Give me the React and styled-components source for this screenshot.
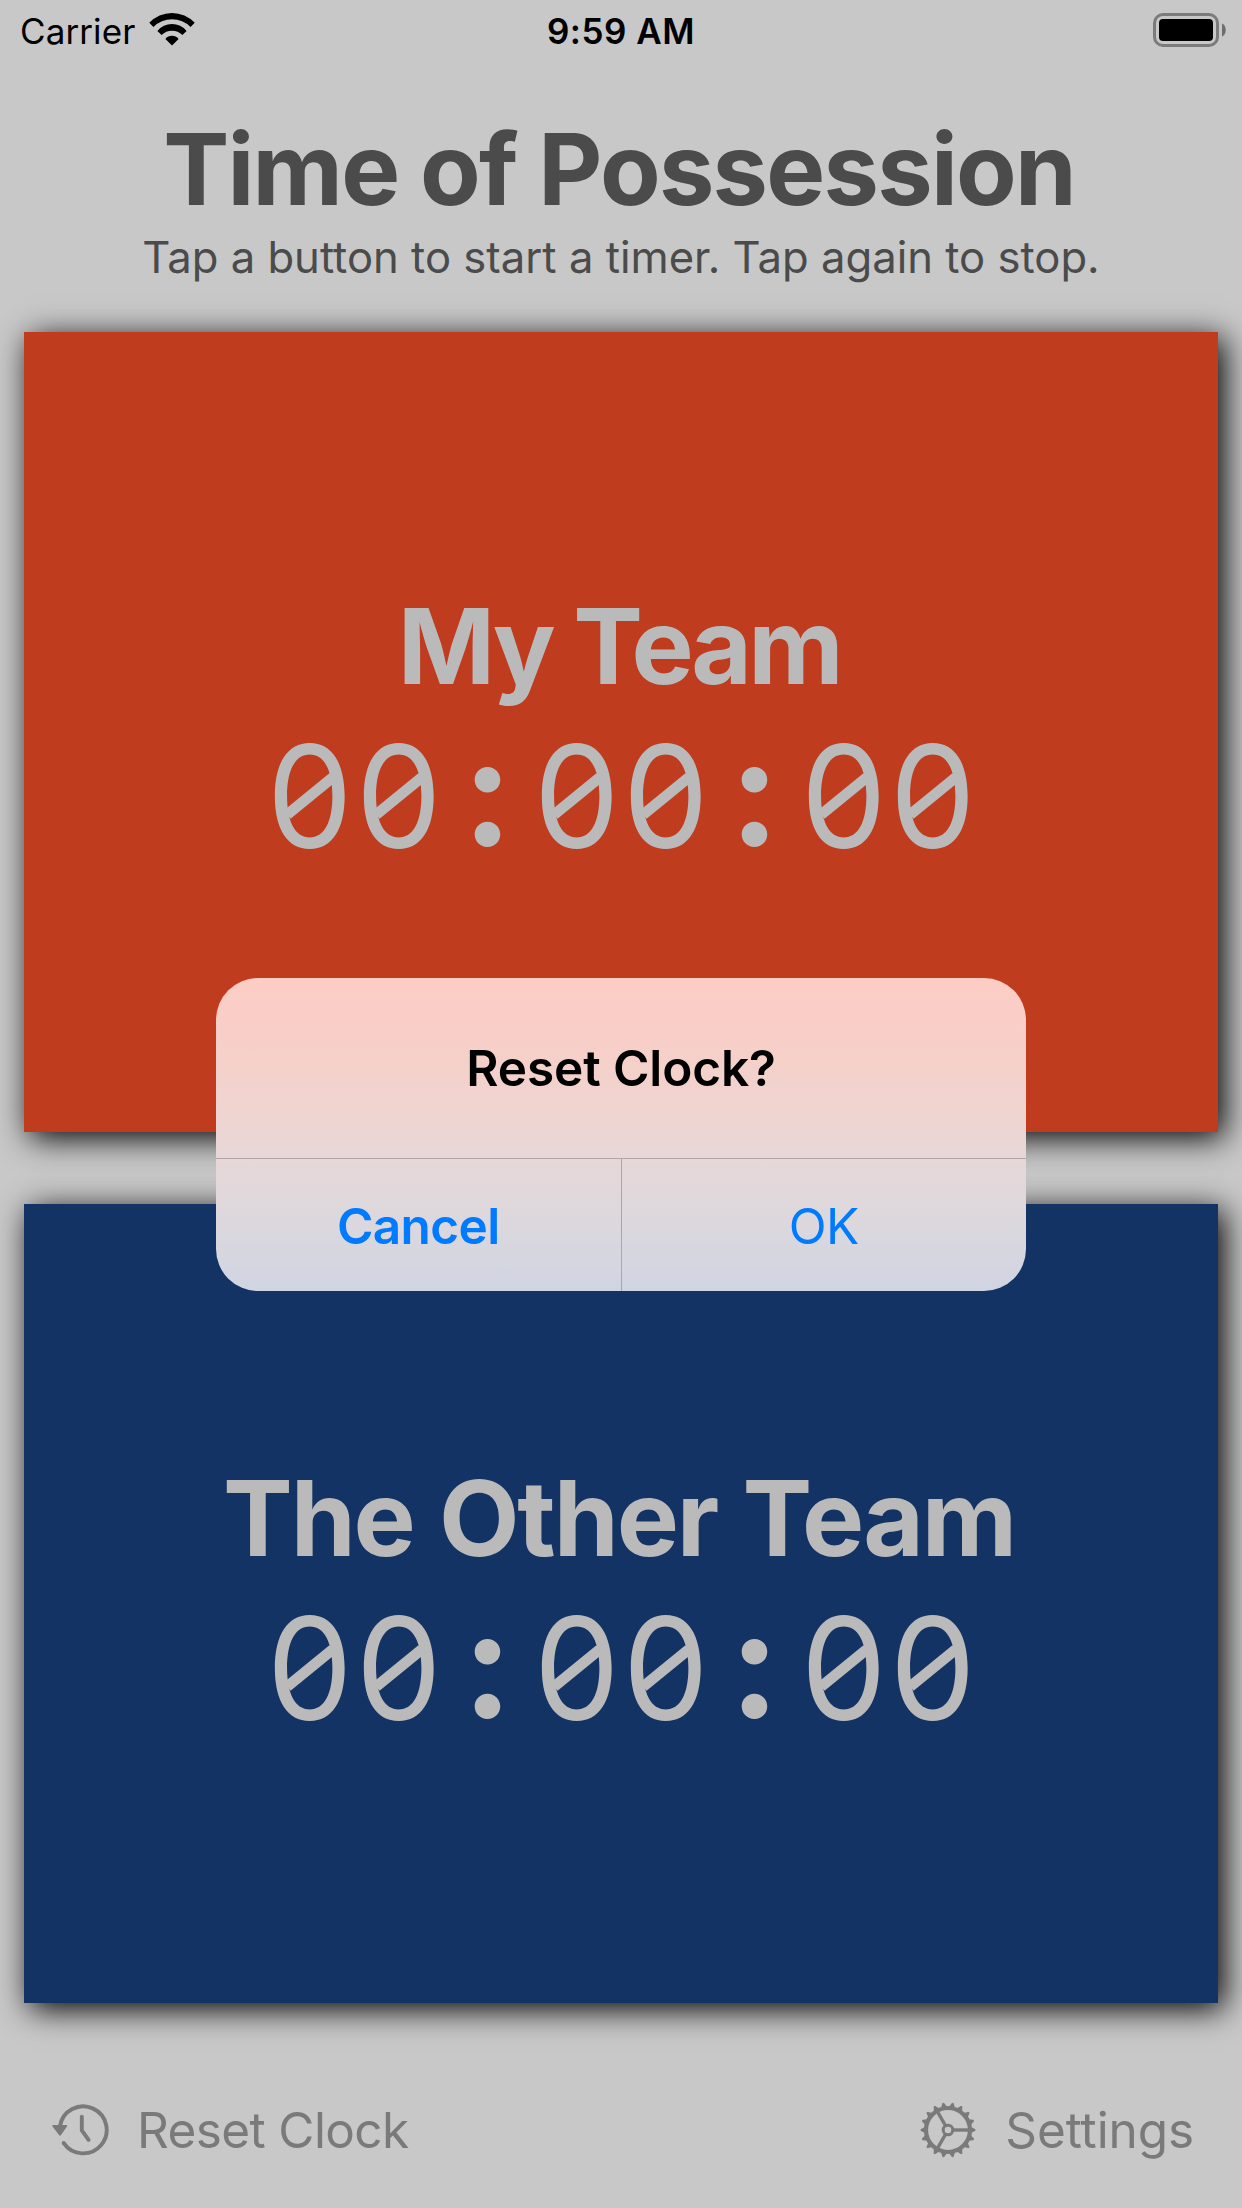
import React from "react";
import styled, { createGlobalStyle } from "styled-components";

const GlobalStyle = createGlobalStyle`
  * { box-sizing: border-box; }
  html, body { margin: 0; padding: 0; }
  body {
    background: #c8c8c8;
    font-family: Inter, "Liberation Sans", sans-serif;
  }
  button { font-family: inherit; border: 0; padding: 0; margin: 0; background: none; }
`;

const Screen = styled.div`
  position: relative;
  width: 1242px;
  height: 2208px;
  overflow: hidden;
  display: flex;
  flex-direction: column;
  background: #c8c8c8;
`;

const StatusBar = styled.div`
  display: grid;
  grid-template-columns: 1fr auto 1fr;
  align-items: center;
  height: 62px;
  padding: 0 15px;
  color: #000;
  font-size: 35px;
  line-height: 62px;
`;

const StatusLeft = styled.div`
  display: flex;
  align-items: center;
  gap: 14px;
  padding-left: 5px;

  svg { margin-bottom: 4px; }
`;

const Carrier = styled.span`
  letter-spacing: 0.1px;
`;

const Clock = styled.span`
  font-weight: 600;
  letter-spacing: 0.5px;
`;

const StatusRight = styled.div`
  display: flex;
  justify-content: flex-end;

  svg { margin-bottom: 2px; }
`;

const Header = styled.header`
  height: 270px;
  padding-top: 47px;
  text-align: center;
  color: #4b4b4b;
  white-space: nowrap;
`;

const Title = styled.h1`
  margin: 0;
  padding-right: 4px;
  font-size: 99px;
  line-height: 120px;
  font-weight: 700;
  letter-spacing: -1.75px;
`;

const Subtitle = styled.p`
  margin: 0;
  font-size: 43.6px;
  line-height: 57px;
`;

const Teams = styled.main`
  display: flex;
  flex-direction: column;
  gap: 72px;
  padding: 0 24px;
`;

const TeamCard = styled.section`
  height: 799.5px;
  padding-top: 1px;
  display: flex;
  flex-direction: column;
  align-items: center;
  justify-content: center;
  background: ${(p) => p.$color};
  color: #bababa;
  box-shadow: 6px 6px 30px #000;
  white-space: nowrap;
`;

const TeamName = styled.h2`
  margin: 0;
  padding-right: 4px;
  font-size: 104.5px;
  line-height: 128px;
  font-weight: 700;
  letter-spacing: ${(p) => p.$tracking}px;
  word-spacing: ${(p) => p.$wordGap || 0}px;
`;

const Timer = styled.div`
  display: flex;
  font-size: 142px;
  line-height: 172px;
`;

const Digit = styled.span`
  position: relative;
  width: 89px;
  text-align: center;
  transform: scaleX(0.96);

  &::after {
    content: "";
    position: absolute;
    left: 50%;
    top: 50%;
    width: 60px;
    height: 11px;
    background: currentColor;
    transform: translate(-50%, -50%) rotate(-38.1deg);
  }
`;

const Colon = styled.span`
  width: 89px;
  margin-top: -5px;
  text-align: center;
  font-size: 151px;
  font-weight: 660;
`;

const Toolbar = styled.footer`
  display: flex;
  justify-content: space-between;
  align-items: center;
  margin-top: 67px;
  height: 120px;
  padding: 0 48px 0 50px;
`;

const ToolButton = styled.button`
  display: flex;
  align-items: center;
  gap: 27px;
  color: #7a7a7a;
  font-size: 49.5px;
  line-height: 60px;
  letter-spacing: ${(p) => p.$tracking}px;
`;

const Overlay = styled.div`
  position: absolute;
  inset: 0;
  display: flex;
  justify-content: center;
  align-items: flex-start;
  padding-top: 978px;
`;

const Alert = styled.div`
  width: 810px;
  height: 313px;
  display: flex;
  flex-direction: column;
  overflow: hidden;
  border-radius: 42px;
  background: linear-gradient(180deg, #fccdc5 0%, #f7cfc8 22%, #efd4cf 42%, #e6d7d8 58%, #ded8dc 74%, #d5d6e0 90%, #d0d5e2 100%);
`;

const AlertTitle = styled.div`
  height: 181px;
  border-bottom: 1px solid #b9a2a2;
  color: #000;
  text-align: center;
  font-size: 49.5px;
  line-height: 180px;
  font-weight: 600;
  letter-spacing: -0.1px;
`;

const AlertActions = styled.div`
  flex: 1;
  display: flex;
`;

const AlertButton = styled.button`
  flex: 1;
  padding-top: 3px;
  color: #007aff;
  font-size: 49.5px;
  line-height: 129px;
  font-weight: ${(p) => (p.$bold ? 600 : 400)};
  letter-spacing: -0.6px;
  & + & { border-left: 1px solid #aba5ad; }
`;

function WifiIcon() {
  return (
    <svg width="46" height="34" viewBox="-23 -33.5 46 34" fill="#000">
      <path d="M-22.7-22.7A31 31 0 0 1 22.7-22.7L18.6-18.6A26.3 26.3 0 0 0-18.6-18.6Z" />
      <path d="M-14.6-14.6A19 19 0 0 1 14.6-14.6L10.4-10.4A14.7 14.7 0 0 0-10.4-10.4Z" />
      <path d="M-6.6-6.6A8.4 8.4 0 0 1 6.6-6.6L0 0Z" />
    </svg>
  );
}

function BatteryIcon() {
  return (
    <svg width="74" height="34" viewBox="0 0 74 34">
      <rect x="1.5" y="1.5" width="63" height="31" rx="8.5" fill="none" stroke="#7b7b7b" strokeWidth="3" />
      <rect x="6" y="6" width="54" height="22" rx="4" fill="#000" />
      <path d="M69 10.5C74 12.5 74 21.5 69 23.5Z" fill="#6e6e6e" />
    </svg>
  );
}

function ResetIcon() {
  return (
    <svg width="60" height="60" viewBox="0 0 60 60" fill="none" stroke="currentColor" strokeWidth="3.9" strokeLinecap="round" strokeLinejoin="round">
      <path d="M13.6 42.9A23.5 23.5 0 1 0 10 26" strokeLinecap="butt" />
      <circle cx="13.6" cy="42.9" r="1.95" fill="currentColor" stroke="none" />
      <path d="M3.3 25.9H16.2L10 34.6Z" fill="currentColor" strokeWidth="2" />
      <path d="M31.8 16.8V30.3L38.6 39.8" />
    </svg>
  );
}

const TEETH = Array.from({ length: 18 }, (_, i) => i * 20);

function GearIcon() {
  return (
    <svg width="60" height="60" viewBox="-30 -30 60 60" fill="none" stroke="currentColor">
      <circle r="22" strokeWidth="4.2" />
      {TEETH.map((a) => (
        <path key={a} d="M23-3L27-1Q28.4 0 27 1L23 3Z" fill="currentColor" stroke="none" transform={`rotate(${a})`} />
      ))}
      <circle r="4.8" strokeWidth="3" />
      {[0, 120, 240].map((a) => (
        <path key={a} d="M5.5 0H22" strokeWidth="3.4" transform={`rotate(${a})`} />
      ))}
    </svg>
  );
}

function Time({ value }) {
  return (
    <Timer>
      {value.split("").map((c, i) => (c === ":" ? <Colon key={i}>{c}</Colon> : <Digit key={i}>{c}</Digit>))}
    </Timer>
  );
}

export default function App() {
  return (
    <Screen>
      <GlobalStyle />
      <StatusBar>
        <StatusLeft>
          <Carrier>Carrier</Carrier>
          <WifiIcon />
        </StatusLeft>
        <Clock>9:59 AM</Clock>
        <StatusRight>
          <BatteryIcon />
        </StatusRight>
      </StatusBar>
      <Header>
        <Title>Time of Possession</Title>
        <Subtitle>Tap a button to start a timer. Tap again to stop.</Subtitle>
      </Header>
      <Teams>
        <TeamCard $color="#bf3c1f">
          <TeamName $tracking={-3.5}>My Team</TeamName>
          <Time value="00:00:00" />
        </TeamCard>
        <TeamCard $color="#133365">
          <TeamName $tracking={-2.1} $wordGap={2.5}>The Other Team</TeamName>
          <Time value="00:00:00" />
        </TeamCard>
      </Teams>
      <Toolbar>
        <ToolButton $tracking={-0.62}>
          <ResetIcon />
          Reset Clock
        </ToolButton>
        <ToolButton $tracking={-0.1}>
          <GearIcon />
          Settings
        </ToolButton>
      </Toolbar>
      <Overlay>
        <Alert>
          <AlertTitle>Reset Clock?</AlertTitle>
          <AlertActions>
            <AlertButton $bold>Cancel</AlertButton>
            <AlertButton>OK</AlertButton>
          </AlertActions>
        </Alert>
      </Overlay>
    </Screen>
  );
}
